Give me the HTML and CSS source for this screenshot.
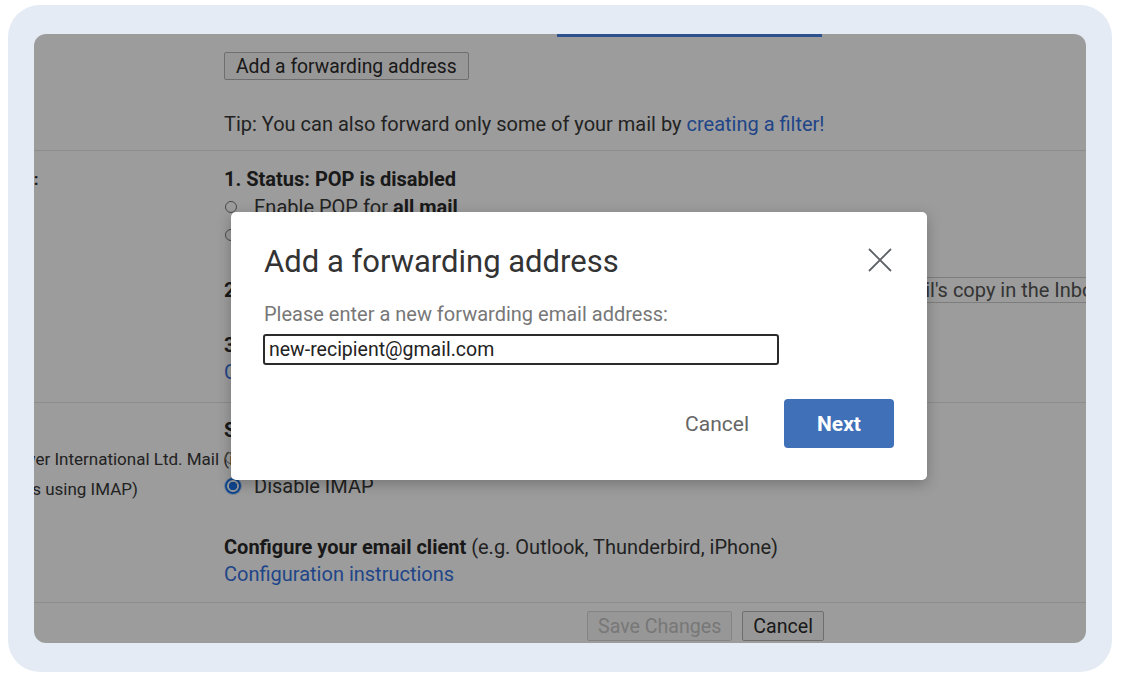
FILE: index.html
```html
<!DOCTYPE html>
<html lang="en">
<head>
  <meta charset="UTF-8">
  <meta name="viewport" content="width=device-width, initial-scale=1.0">
  <title>Add a forwarding address</title>
  <link rel="stylesheet" href="styles.css">
</head>
<body>
  <div class="frame">
    <div class="shot">
      <div class="gmail">
        <div class="topbar"></div>

        <div class="row row-fwd">
          <div class="label"></div>
          <div class="main">
            <button class="gbtn">Add a forwarding address</button>
            <p class="tip">Tip: You can also forward only some of your mail by <a href="#">creating a filter!</a></p>
          </div>
        </div>

        <div class="row row-pop">
          <div class="label"><b>POP download:</b></div>
          <div class="main">
            <div class="section">
              <div class="line"><b>1. Status: POP is disabled</b></div>
              <div class="opt"><span class="radio"></span><span>Enable POP for <b>all mail</b></span></div>
              <div class="opt"><span class="radio"></span><span>Enable POP for <b>mail that arrives from now on</b></span></div>
            </div>
            <div class="section">
              <div class="line"><b>2. When messages are accessed with POP</b> <span class="select">keep Gmail's copy in the Inbox</span></div>
            </div>
            <div class="section">
              <div class="line"><b>3. Configure your email client</b> (e.g. Outlook, Eudora, Netscape Mail)</div>
              <div class="line"><a href="#">Configuration instructions</a></div>
            </div>
          </div>
        </div>

        <div class="row row-imap">
          <div class="label">
            <b class="line">IMAP access:</b>
            <span class="sub first">(access to Tower International Ltd. Mail (incl. webmail)</span>
            <span class="sub">and other clients using IMAP)</span>
          </div>
          <div class="main">
            <div class="section">
              <div class="line"><b>Status: IMAP is disabled</b></div>
              <div class="opt"><span class="radio"></span><span>Enable IMAP</span></div>
              <div class="opt"><span class="radio on"></span><span>Disable IMAP</span></div>
            </div>
            <div class="section wide">
              <div class="line"><b>Configure your email client</b> (e.g. Outlook, Thunderbird, iPhone)</div>
              <div class="line"><a href="#">Configuration instructions</a></div>
            </div>
          </div>
        </div>

        <div class="footer">
          <button class="gbtn" disabled>Save Changes</button>
          <button class="gbtn">Cancel</button>
        </div>
      </div>

      <div class="scrim"></div>

      <div class="dialog" role="dialog">
        <div class="dialog-head">
          <h2>Add a forwarding address</h2>
          <button class="close" aria-label="Close">
            <svg width="24" height="24" viewBox="0 0 24 24"><path d="M1 1L23 23M23 1L1 23" stroke="#5f6368" stroke-width="1.8" fill="none"/></svg>
          </button>
        </div>
        <p class="prompt">Please enter a new forwarding email address:</p>
        <input class="field" type="text" value="new-recipient@gmail.com">
        <div class="dialog-actions">
          <button class="btn-text">Cancel</button>
          <button class="btn-primary">Next</button>
        </div>
      </div>
    </div>
  </div>
</body>
</html>
```
FILE: styles.css
```css
body {
  margin: 0;
  background: #fff;
  font-family: Roboto, "Liberation Sans", sans-serif;
}
.frame {
  margin: 5px 9px 5px 8px;
  height: 667px;
  padding: 29px 26px;
  box-sizing: border-box;
  background: #e4ebf4;
  border-radius: 32px;
}
.shot {
  position: relative;
  height: 609px;
  border-radius: 12px;
  overflow: hidden;
  background: #fff;
}

/* settings page under the scrim */
.gmail {
  width: 1400px;
  margin-left: -112px;
  color: #383838;
  font-size: 20px;
}
.gmail b {
  color: #2a2a2a;
}
.gmail a {
  color: #3572de;
  text-decoration: none;
}
.topbar {
  height: 3px;
  width: 265px;
  margin-left: 635px;
  background: #4a86e8;
}
.row {
  display: grid;
  grid-template-columns: 302px 1fr;
  border-bottom: 1px solid #e5e5e5;
}
.label {
  font-size: 17px;
  line-height: 27px;
  white-space: nowrap;
}
.label .line {
  display: block;
}
.label .sub {
  display: block;
  margin-left: -7px;
  line-height: 30px;
}
.label .sub.first {
  margin-left: -1px;
}
.line {
  line-height: 27px;
  white-space: nowrap;
}
.opt {
  display: flex;
  align-items: center;
  height: 28px;
  white-space: nowrap;
}
.radio {
  width: 12px;
  height: 12px;
  border: 1px solid #767676;
  border-radius: 50%;
  margin: 0 17px 0 1px;
  box-sizing: border-box;
  flex: none;
}
.radio.on {
  width: 16px;
  height: 16px;
  margin: 0 13px 0 1px;
  border: 2px solid #1a73e8;
  background: radial-gradient(circle, #1a73e8 0 4px, #fff 4.5px);
  box-shadow: 0 0 0 1px rgba(26, 115, 232, 0.3);
}
.select {
  display: inline-block;
  margin-left: 219px;
  padding: 0 30px 0 6px;
  line-height: 24px;
  border: 1px solid #ccc;
  color: #555;
  font-weight: normal;
}
.row-fwd {
  padding: 15px 0 12px;
}
.row-fwd .tip {
  margin: 31px 0 0;
  line-height: 27px;
}
.row-pop {
  padding: 15px 0 16px;
}
.row-imap {
  padding: 14px 0 14px;
}
.section + .section {
  margin-top: 28px;
}
.section.wide {
  margin-top: 34px;
}
.gbtn {
  font: inherit;
  font-size: 19.3px;
  color: #2a2a2a;
  height: 28px;
  padding: 0 11px;
  background: #f7f7f7;
  border: 1px solid #b4b4b4;
  border-radius: 2px;
}
.gbtn:disabled {
  color: #c4c4c4;
  border-color: #d8d8d8;
}
.footer {
  display: flex;
  gap: 10px;
  padding: 8px 0 0 665px;
}
.footer .gbtn {
  height: 30px;
  padding: 0 10px;
  font-size: 19.6px;
}

.scrim {
  position: absolute;
  inset: 0;
  background: rgba(0, 0, 0, 0.39);
}

/* dialog */
.dialog {
  position: absolute;
  left: 197px;
  top: 178px;
  width: 696px;
  height: 268px;
  box-sizing: border-box;
  padding: 30px 33px 0 33px;
  background: #fff;
  border-radius: 5px;
  box-shadow: 0 4px 14px rgba(0, 0, 0, 0.25);
}
.dialog-head {
  display: flex;
  justify-content: space-between;
  align-items: flex-start;
}
.dialog h2 {
  margin: 0;
  font-size: 31px;
  font-weight: 400;
  line-height: 40px;
  color: #333;
}
.close {
  margin: 6px 2px 0 0;
  padding: 0;
  width: 24px;
  height: 24px;
  border: 0;
  background: none;
}
.prompt {
  margin: 20px 0 0;
  font-size: 20px;
  line-height: 24px;
  color: #777;
}
.field {
  display: block;
  width: 516px;
  height: 31px;
  margin: 8px 0 0 -1px;
  box-sizing: border-box;
  padding: 0 4px;
  border: 2px solid #2b2b2b;
  border-radius: 3px;
  font: inherit;
  font-size: 19.5px;
  color: #222;
}
.dialog-actions {
  display: flex;
  justify-content: flex-end;
  align-items: center;
  gap: 19px;
  margin-top: 34px;
}
.btn-text {
  padding: 0 16px;
  height: 36px;
  border: 0;
  background: none;
  font: inherit;
  font-size: 21px;
  color: #666;
}
.btn-primary {
  width: 110px;
  height: 49px;
  border: 0;
  border-radius: 4px;
  background: #3f70b8;
  color: #fff;
  font: inherit;
  font-size: 21px;
  font-weight: 700;
}
```
